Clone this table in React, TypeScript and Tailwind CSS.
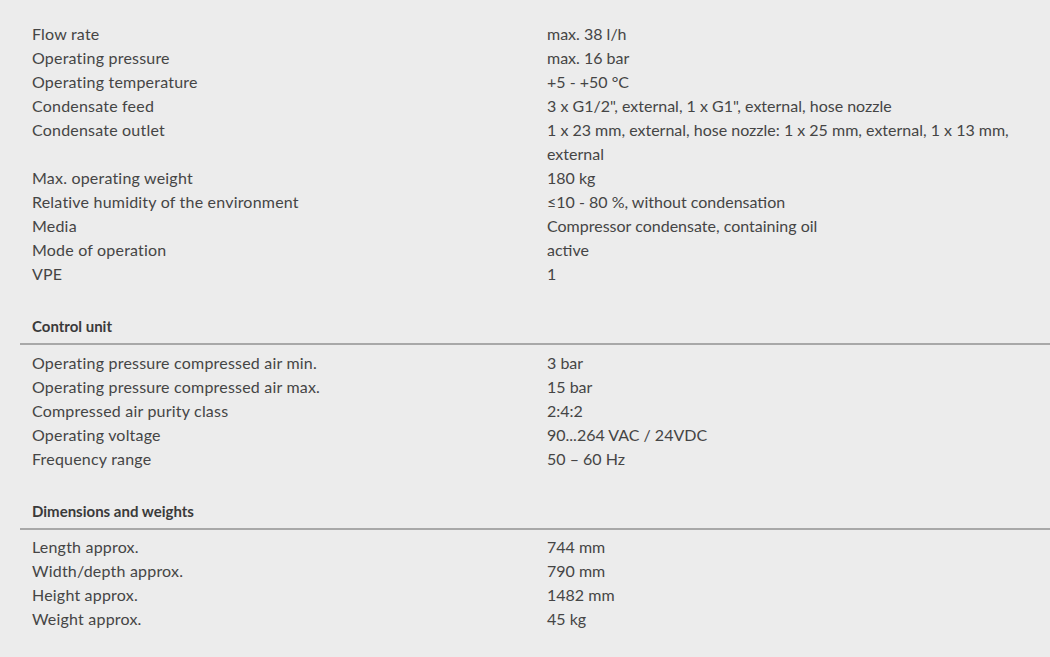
const general: [string, string][] = [
  ["Flow rate", "max. 38 l/h"],
  ["Operating pressure", "max. 16 bar"],
  ["Operating temperature", "+5 - +50 °C"],
  ["Condensate feed", "3 x G1/2\", external, 1 x G1\", external, hose nozzle"],
  ["Condensate outlet", "1 x 23 mm, external, hose nozzle: 1 x 25 mm, external, 1 x 13 mm, external"],
  ["Max. operating weight", "180 kg"],
  ["Relative humidity of the environment", "≤10 - 80 %, without condensation"],
  ["Media", "Compressor condensate, containing oil"],
  ["Mode of operation", "active"],
  ["VPE", "1"],
];

const control: [string, string][] = [
  ["Operating pressure compressed air min.", "3 bar"],
  ["Operating pressure compressed air max.", "15 bar"],
  ["Compressed air purity class", "2:4:2"],
  ["Operating voltage", "90...264 VAC / 24VDC"],
  ["Frequency range", "50 – 60 Hz"],
];

const dims: [string, string][] = [
  ["Length approx.", "744 mm"],
  ["Width/depth approx.", "790 mm"],
  ["Height approx.", "1482 mm"],
  ["Weight approx.", "45 kg"],
];

function Rows({ rows }: { rows: [string, string][] }) {
  return (
    <div>
      {rows.map(([label, value]) => (
        <div key={label} className="grid grid-cols-2 leading-6">
          <div className="px-3 tracking-[0.2px]">{label}</div>
          <div className="px-3 pr-10">{value}</div>
        </div>
      ))}
    </div>
  );
}

function Section({ title, rows, tight }: { title: string; rows: [string, string][]; tight?: boolean }) {
  return (
    <div className="mt-7">
      <div className="border-b-2 border-[#a8a8a8] px-3 pb-[5px] text-[15px] font-bold leading-6 text-[#3a3a3a]">
        {title}
      </div>
      <div className={tight ? "pt-[5px]" : "pt-[6px]"}>
        <Rows rows={rows} />
      </div>
    </div>
  );
}

export default function App() {
  return (
    <div
      className="min-h-[657px] bg-[#ececec] pl-5 pt-[22px] text-[16px] text-[#454545]"
      style={{ fontFamily: "Lato, 'Open Sans', sans-serif" }}
    >
      <Rows rows={general} />
      <Section title="Control unit" rows={control} />
      <Section title="Dimensions and weights" rows={dims} tight />
    </div>
  );
}
